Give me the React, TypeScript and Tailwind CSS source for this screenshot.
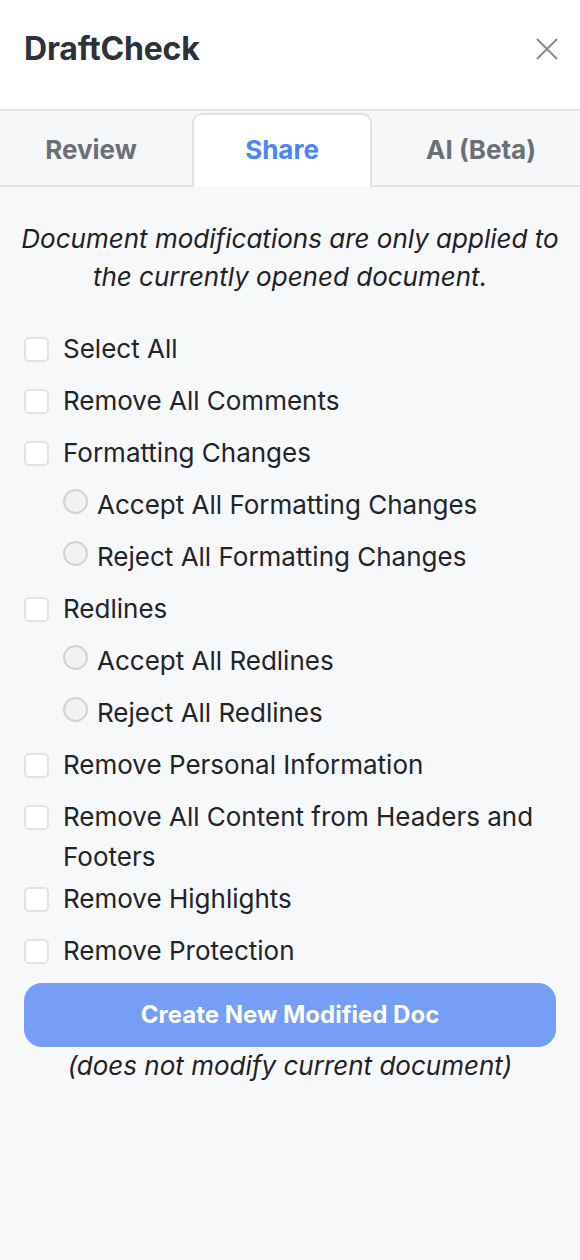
import { useState } from "react"

type Item =
  | { kind: "check"; label: string; wrap?: boolean }
  | { kind: "radio"; label: string; group: string }

const items: Item[] = [
  { kind: "check", label: "Select All" },
  { kind: "check", label: "Remove All Comments" },
  { kind: "check", label: "Formatting Changes" },
  { kind: "radio", label: "Accept All Formatting Changes", group: "fmt" },
  { kind: "radio", label: "Reject All Formatting Changes", group: "fmt" },
  { kind: "check", label: "Redlines" },
  { kind: "radio", label: "Accept All Redlines", group: "red" },
  { kind: "radio", label: "Reject All Redlines", group: "red" },
  { kind: "check", label: "Remove Personal Information" },
  { kind: "check", label: "Remove All Content from Headers and Footers", wrap: true },
  { kind: "check", label: "Remove Highlights" },
  { kind: "check", label: "Remove Protection" },
]

export default function App() {
  const [tab, setTab] = useState("Share")
  const tabs = [
    { name: "Review", width: "w-[192px] pr-[10px]" },
    { name: "Share", width: "w-[180px]" },
    { name: "AI (Beta)", width: "flex-1 pl-[10px]" },
  ]

  return (
    <div
      className="min-h-screen w-full bg-[#f7f8fa] text-[#222428]"
      style={{ fontFamily: "Inter, 'Noto Sans', sans-serif" }}
    >
      {/* header */}
      <header className="h-[111px] bg-white border-b-2 border-[#e3e5e8] flex items-center justify-between pl-6 pr-[22px] pb-[11px]">
        <h1 className="text-[32px] font-bold text-[#2d3139] tracking-[-0.2px]">DraftCheck</h1>
        <button className="text-[#8c8c8c]" aria-label="Close">
          <svg width="22" height="22" viewBox="0 0 22 22" fill="none" stroke="currentColor" strokeWidth="2">
            <path d="M1 1L21 21M21 1L1 21" />
          </svg>
        </button>
      </header>

      {/* tabs */}
      <nav className="flex h-[76px] bg-[#f6f7f9] border-b-2 border-[#e1e3e6]">
        {tabs.map((t) => {
          const active = t.name === tab
          return (
            <button
              key={t.name}
              onClick={() => setTab(t.name)}
              className={
                t.width +
                " flex items-center justify-center text-[26px] font-bold " +
                (active
                  ? "mt-[2px] -mb-[2px] pb-[4px] bg-white rounded-t-[10px] border-2 border-b-0 border-[#dfe1e5] text-[#4a86f5]"
                  : "pt-[2px] text-[#6b6f76]")
              }
            >
              {t.name}
            </button>
          )
        })}
      </nav>

      {/* share content */}
      <main className="px-6">
        <p className="-mx-2 mt-[33px] text-center italic text-[26px] leading-[38px] text-[#1f2125]">
          Document modifications are only applied to the currently opened document.
        </p>

        <ul className="mt-[33px] flex flex-col gap-3">
          {items.map((it) =>
            it.kind === "check" ? (
              <li key={it.label} className={"flex items-start" + (it.wrap ? " -mb-[10px]" : "")}>
                <span className="mt-[8px] w-[25px] h-[25px] shrink-0 rounded-[5px] border-2 border-[#e0e2e6] bg-white" />
                <span className="ml-[14px] text-[26px] leading-[40px]">{it.label}</span>
              </li>
            ) : (
              <li key={it.label} className="flex items-start pl-[39px]">
                <span className="mt-[4px] w-[25px] h-[25px] shrink-0 rounded-full border-2 border-[#d2d2d2] bg-[#f2f2f2]" />
                <span className="ml-[9px] text-[26px] leading-[40px]">{it.label}</span>
              </li>
            )
          )}
        </ul>

        <button className="mt-3 w-full h-[64px] rounded-[18px] bg-[#779ef6] text-white text-[24px] font-bold">
          Create New Modified Doc
        </button>
        <p className="text-center italic text-[26px] leading-[38px] text-[#1f2125]">
          (does not modify current document)
        </p>
      </main>
    </div>
  )
}
